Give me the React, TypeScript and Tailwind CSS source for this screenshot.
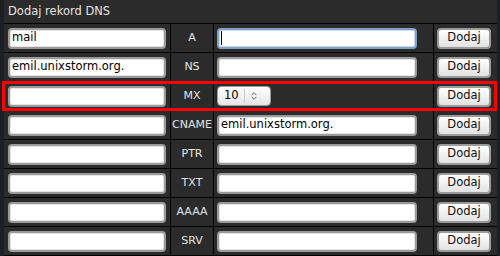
import { ChevronsUpDown } from "lucide-react";

const ROWS = [
	{ host: "mail", type: "A", value: "", focused: true },
	{ host: "emil.unixstorm.org.", type: "NS", value: "" },
	{ host: "", type: "MX", value: "10", spin: true },
	{ host: "", type: "CNAME", value: "emil.unixstorm.org." },
	{ host: "", type: "PTR", value: "" },
	{ host: "", type: "TXT", value: "" },
	{ host: "", type: "AAAA", value: "" },
	{ host: "", type: "SRV", value: "" },
];

function Field({ text, width, focused }: { text: string; width: string; focused?: boolean }) {
	return (
		<div
			className={
				"flex items-center h-[21px] rounded-[4px] bg-white px-[2px] text-[11.5px] text-black " +
				width +
				(focused
					? " border-2 border-[#7fa2c8] shadow-[inset_0_0_0_1px_#c9d9ea]"
					: " border-2 border-[#9a9a9a] shadow-[inset_0_0_0_1px_#e6e6e6]")
			}
		>
			{focused && <span className="w-px h-[14px] bg-black" />}
			{text}
		</div>
	);
}

function Spinner({ value }: { value: string }) {
	return (
		<div className="flex items-center h-[20px] w-[54px] rounded-[4px] border border-[#9a9a9a] bg-gradient-to-b from-[#ffffff] to-[#e6e6e6] text-[11.5px] text-black">
			<span className="pl-[6px] pr-[5px]">{value}</span>
			<span className="h-[14px] w-px bg-[#c8c8c8]" />
			<ChevronsUpDown size={10} strokeWidth={2} className="ml-[4px] text-[#444]" />
		</div>
	);
}

function Button() {
	return (
		<button
			type="button"
			className="flex items-center justify-center h-[21px] w-[54px] rounded-[4px] border-2 border-[#9a9a9a] bg-gradient-to-b from-[#ffffff] to-[#e2e2e2] text-[11.5px] text-[#111]"
		>
			Dodaj
		</button>
	);
}

export default function App() {
	return (
		<div
			className="relative w-[500px] h-[256px] overflow-hidden bg-[#1c2025] pl-[4px] pr-[3px]"
			style={{ fontFamily: '"DejaVu Sans", Verdana, sans-serif' }}
		>
			<div className="bg-black flex flex-col gap-px pb-px">
				{/* header */}
				<div className="h-[23px] flex items-center bg-[#2b2b2b] px-[4px] text-[11.5px] text-[#e4e4e4]">
					Dodaj rekord DNS
				</div>

				<div className="grid grid-cols-[166px_42px_219px_1fr] gap-px">
					{ROWS.map((row) => (
						<div key={row.type} className="contents">
							<div className="h-[28px] bg-[#2b2b2b] flex items-center pl-[4px]">
								<Field text={row.host} width="w-[158px]" />
							</div>
							<div className="h-[28px] bg-[#2b2b2b] flex items-center justify-center text-[11px] text-[#e4e4e4]">
								{row.type}
							</div>
							<div className="h-[28px] bg-[#2b2b2b] flex items-center pl-[3px]">
								{row.spin ? (
									<Spinner value={row.value} />
								) : (
									<Field text={row.value} width="w-[200px]" focused={row.focused} />
								)}
							</div>
							<div className="h-[28px] bg-[#2b2b2b] flex items-center pl-[3px]">
								<Button />
							</div>
						</div>
					))}
				</div>
			</div>

			{/* highlight around the MX row */}
			<div className="absolute left-[2px] top-[81px] w-[495px] h-[30px] border-[3px] border-[#ff0000] pointer-events-none" />
		</div>
	);
}
